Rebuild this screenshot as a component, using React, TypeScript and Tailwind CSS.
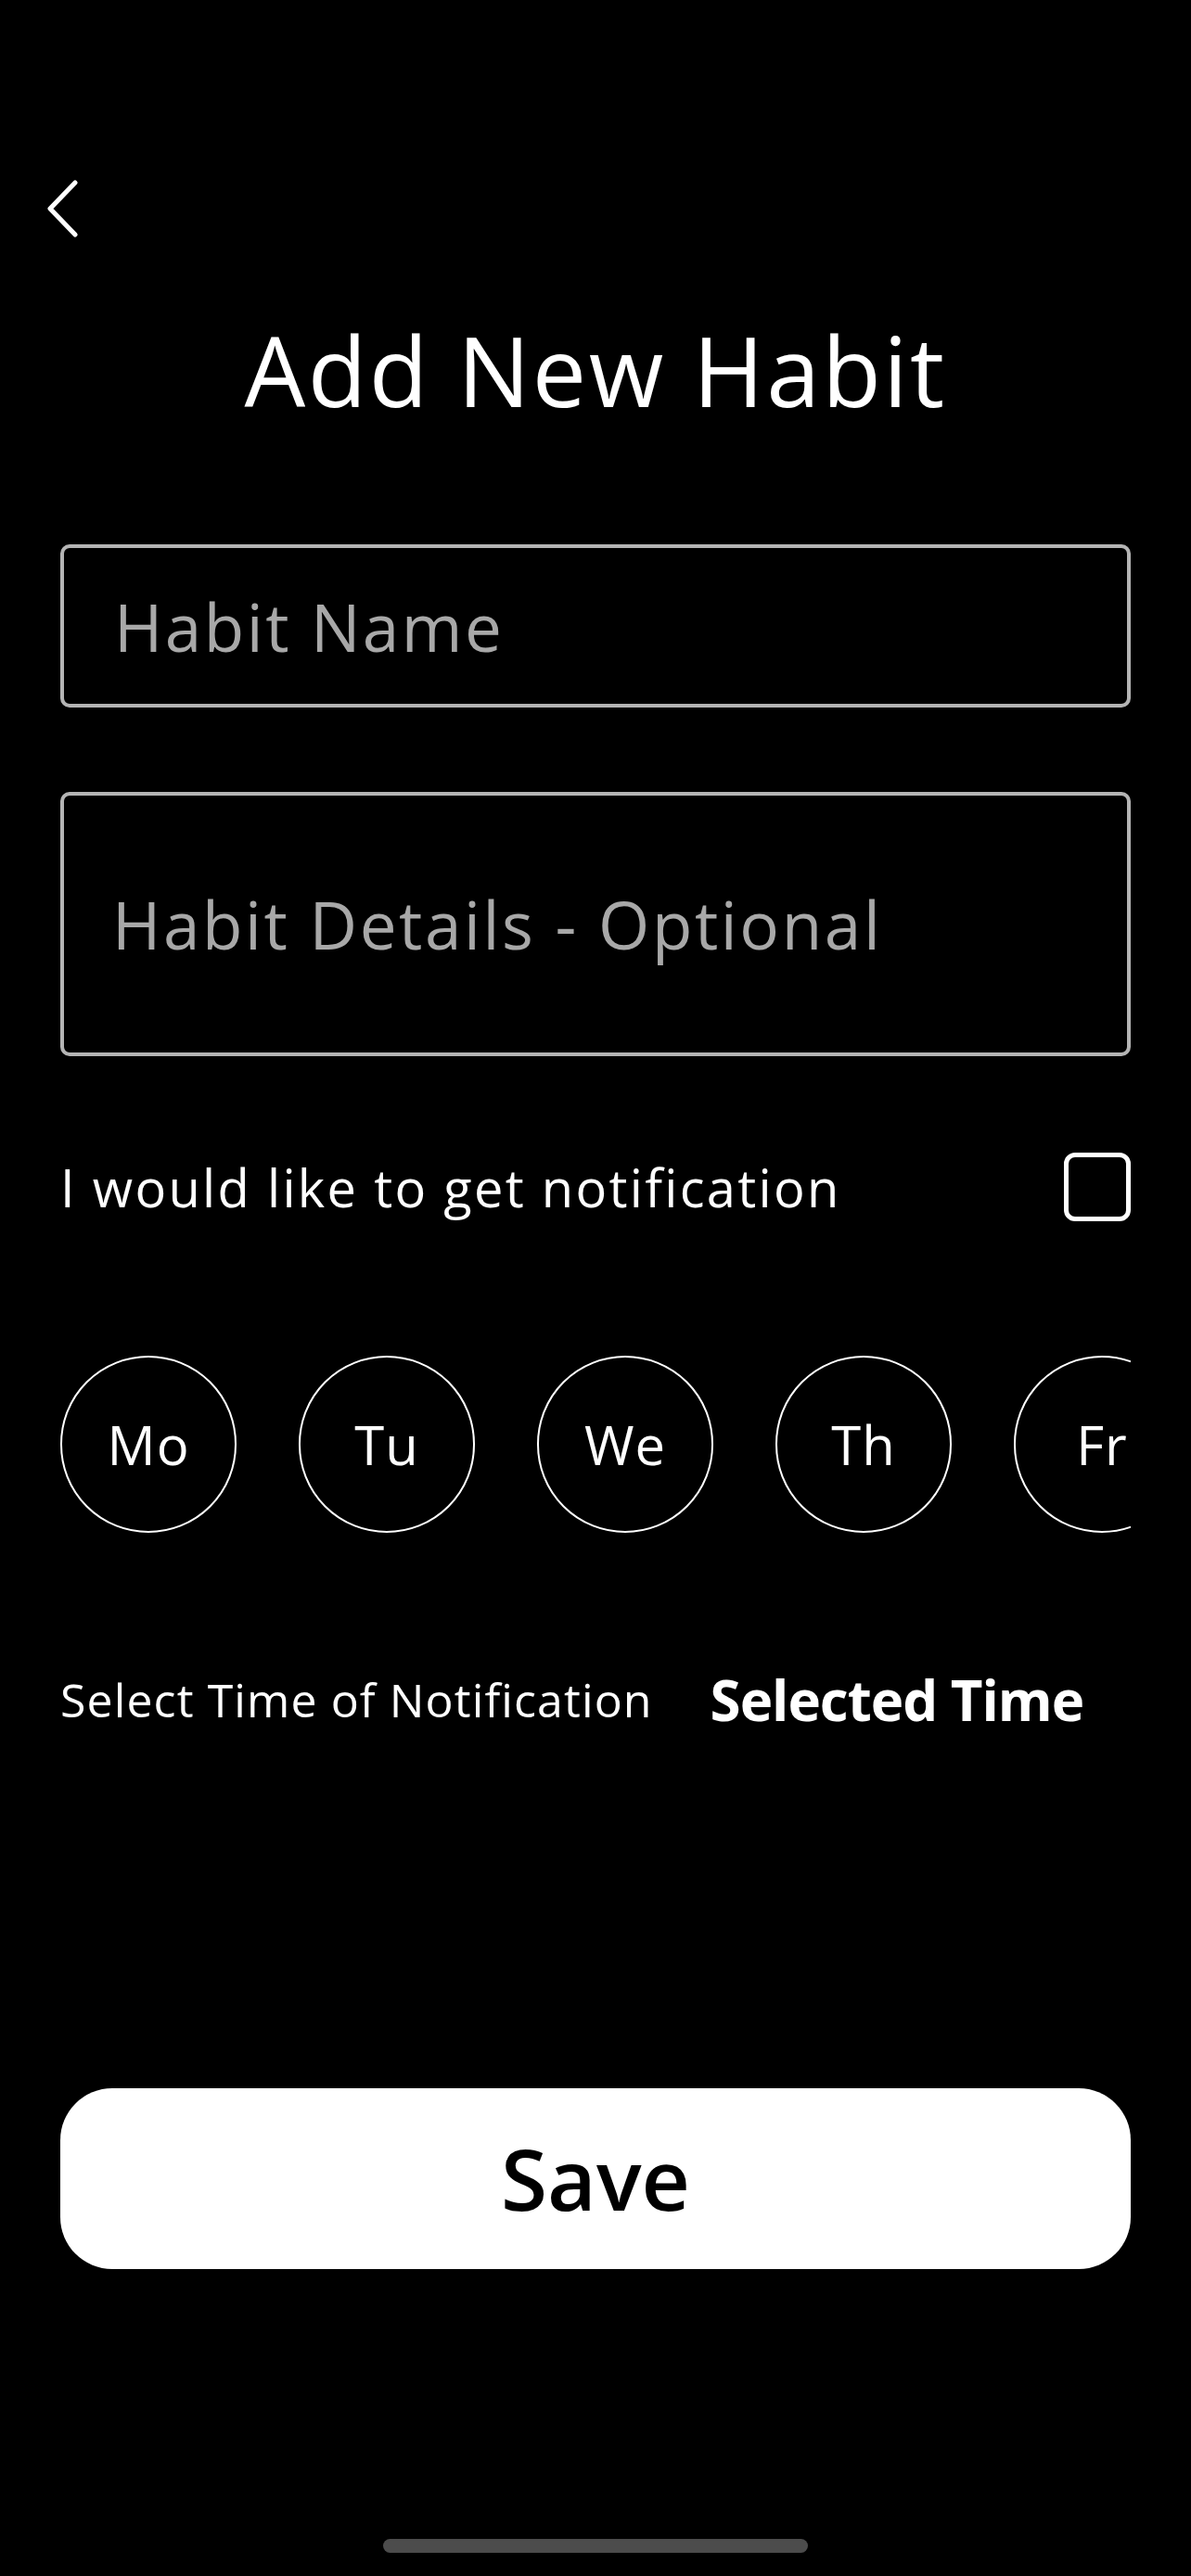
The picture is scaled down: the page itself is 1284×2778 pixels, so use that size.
const days = ["Mo", "Tu", "We", "Th", "Fr", "Sa", "Su"];

export default function App() {
  return (
    <div
      className="flex h-[2778px] w-[1284px] flex-col overflow-hidden bg-black px-[65px] text-white"
      style={{ fontFamily: '"Open Sans", "Noto Sans", sans-serif' }}
    >
      {/* back */}
      <div className="-ml-[20px] mt-[193px] flex h-[64px] w-[44px] items-center justify-center">
        <svg width="40" height="64" viewBox="0 0 40 64" fill="none">
          <polyline
            points="34,4 7,32 34,60"
            stroke="white"
            strokeWidth="5"
            strokeLinecap="round"
            strokeLinejoin="round"
          />
        </svg>
      </div>

      <h1 className="mt-[90px] text-center text-[104px] leading-none font-normal tracking-[2.4px]">Add New Habit</h1>

      <div className="mt-[136px] flex h-[176px] items-center rounded-[10px] border-4 border-[#b4b4b4] pl-[54px]">
        <span className="text-[71px] leading-none tracking-[2.5px] text-[#a8a8a8]">Habit Name</span>
      </div>

      <div className="mt-[91px] flex h-[285px] items-center rounded-[10px] border-4 border-[#b4b4b4] pl-[52px]">
        <span className="text-[71px] leading-none tracking-[2.6px] text-[#a8a8a8]">Habit Details - Optional</span>
      </div>

      <div className="mt-[104px] flex h-[74px] items-center justify-between">
        <span className="text-[56px] leading-none tracking-[2.3px]">I would like to get notification</span>
        <div className="h-[74px] w-[72px] rounded-[12px] border-[5px] border-white" />
      </div>

      <div className="mt-[145px] flex gap-[67px] overflow-hidden">
        {days.map((d) => (
          <div
            key={d}
            className="flex h-[191px] w-[190px] shrink-0 items-center justify-center rounded-full border-2 border-white"
          >
            <span className="text-[58px] leading-none tracking-[1px]">{d}</span>
          </div>
        ))}
      </div>

      <div className="mt-[150px] flex h-[60px] items-center gap-[62px]">
        <span className="text-[50px] leading-none tracking-[1.1px]">Select Time of Notification</span>
        <span className="text-[60px] leading-none font-bold tracking-[-1px]">Selected Time</span>
      </div>

      <button className="mt-[389px] flex h-[195px] items-center justify-center rounded-[56px] bg-white">
        <span className="text-[91px] leading-none font-semibold text-black">Save</span>
      </button>

      <div className="mx-auto mt-[291px] h-[15px] w-[458px] rounded-full bg-[#4c4c4c]" />
    </div>
  );
}
